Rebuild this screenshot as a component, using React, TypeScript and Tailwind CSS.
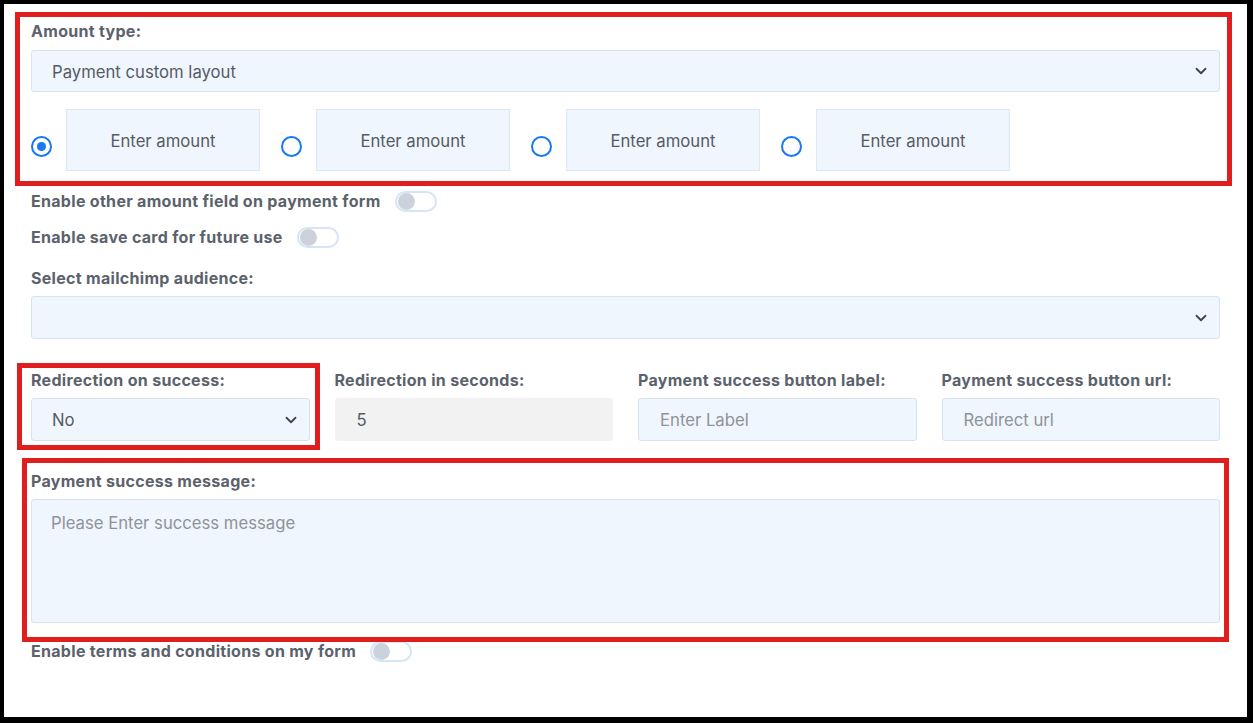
import { ChevronDown } from "lucide-react"

const font = { fontFamily: "Inter, 'Noto Sans', sans-serif" }

function Label({ children }: { children: React.ReactNode }) {
  return (
    <div className="h-5 text-[16px] leading-5 font-bold tracking-[0.3px] text-[#5b626c] whitespace-nowrap">
      {children}
    </div>
  )
}

function Toggle() {
  return (
    <div className="flex h-[21px] w-[42px] items-center rounded-full border-2 border-[#d6e4f8] bg-white px-[1px]">
      <div className="h-[17px] w-[17px] rounded-full bg-[#ccd2dc]" />
    </div>
  )
}

function ToggleRow({ label, className }: { label: string; className?: string }) {
  return (
    <div className={`flex h-6 items-center gap-[14px] ${className ?? ""}`}>
      <Label>{label}</Label>
      <Toggle />
    </div>
  )
}

function SelectBox({ value, className }: { value?: string; className?: string }) {
  return (
    <div
      className={`flex items-center justify-between rounded-[3px] border border-[#d5e3f3] bg-[#f0f6fe] pl-5 pr-[9px] text-[16.7px] text-[#555b63] ${className ?? ""}`}
    >
      <span className="pt-[3px]">{value}</span>
      <ChevronDown className="h-[18px] w-[18px] text-[#3f444b]" strokeWidth={2.4} />
    </div>
  )
}

function Radio({ checked }: { checked?: boolean }) {
  return (
    <div className="mt-[13px] flex h-[21px] w-[21px] shrink-0 items-center justify-center rounded-full border-[2.5px] border-[#1877f2]">
      {checked && <div className="h-[9px] w-[9px] rounded-full bg-[#1877f2]" />}
    </div>
  )
}

function AmountOption({ checked }: { checked?: boolean }) {
  return (
    <div className="flex items-center gap-[14px]">
      <Radio checked={checked} />
      <div className="flex h-[62px] w-[194px] items-center justify-center border border-[#dbe7f5] bg-[#f0f6fe] pt-[4px] text-[16.7px] text-[#555b63]">
        Enter amount
      </div>
    </div>
  )
}

function TextInput({ value, placeholder, disabled }: { value?: string; placeholder?: string; disabled?: boolean }) {
  return (
    <div
      className={`flex h-[43px] items-center rounded-[3px] pl-[21px] pt-[3px] text-[16.7px] ${
        disabled
          ? "border border-[#f2f2f2] bg-[#f2f2f2] text-[#555b63]"
          : "border border-[#d5e3f3] bg-[#f0f6fe] text-[#8e939a]"
      }`}
    >
      {value ?? placeholder}
    </div>
  )
}

export default function App() {
  return (
    <div
      style={font}
      className="relative h-[723px] w-[1253px] border-t-4 border-l-4 border-r-[6px] border-b-[6px] border-black bg-white"
    >
      <div className="flex flex-col px-[27px] pt-[17px]">
        <Label>Amount type:</Label>
        <SelectBox value="Payment custom layout" className="mt-[9px] h-[42px]" />

        <div className="mt-[17px] flex gap-[21px]">
          <AmountOption checked />
          <AmountOption />
          <AmountOption />
          <AmountOption />
        </div>

        <ToggleRow label="Enable other amount field on payment form" className="mt-[18px]" />
        <ToggleRow label="Enable save card for future use" className="mt-3" />

        <div className="mt-[19px]">
          <Label>Select mailchimp audience:</Label>
        </div>
        <SelectBox className="mt-2 h-[43px]" />

        <div className="mt-[31px] grid grid-cols-4 gap-x-[25px] gap-y-2">
          <Label>Redirection on success:</Label>
          <Label>Redirection in seconds:</Label>
          <Label>Payment success button label:</Label>
          <Label>Payment success button url:</Label>
          <SelectBox value="No" className="h-[43px]" />
          <TextInput value="5" disabled />
          <TextInput placeholder="Enter Label" />
          <TextInput placeholder="Redirect url" />
        </div>

        <div className="mt-[30px]">
          <Label>Payment success message:</Label>
        </div>
        <div className="mt-2 h-[124px] rounded-[3px] border border-[#d5e3f3] bg-[#f0f6fe] px-[19px] pt-[11px] text-[16.7px] text-[#8e939a]">
          Please Enter success message
        </div>

        <ToggleRow label="Enable terms and conditions on my form" className="mt-4" />
      </div>

      {/* annotation frames */}
      <div className="pointer-events-none absolute left-[11px] top-[8px] h-[174px] w-[1217px] border-[5px] border-[#e01e1e]" />
      <div className="pointer-events-none absolute left-[13px] top-[359px] h-[87px] w-[303px] border-[5px] border-[#e01e1e]" />
      <div className="pointer-events-none absolute left-[18px] top-[454px] h-[184px] w-[1207px] border-[5px] border-[#e01e1e]" />
    </div>
  )
}
